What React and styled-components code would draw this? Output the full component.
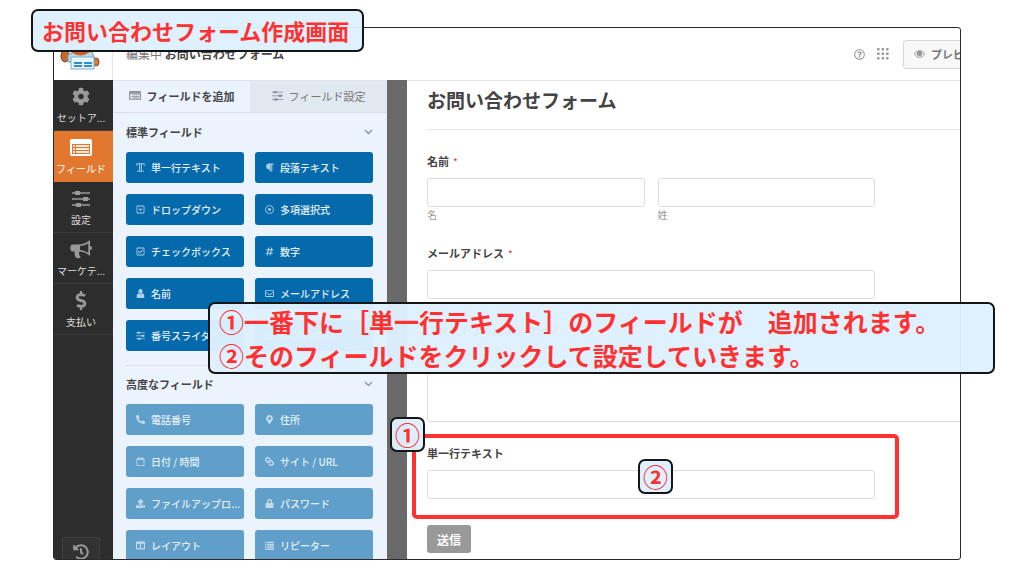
import React from "react";
import styled, { createGlobalStyle, css } from "styled-components";
import {
  FaCog,
  FaDollarSign,
  FaHistory,
  FaParagraph,
  FaRegCaretSquareDown,
  FaRegDotCircle,
  FaRegCheckSquare,
  FaHashtag,
  FaRegEnvelope,
  FaPhoneAlt,
  FaMapMarkerAlt,
  FaRegCalendar,
  FaLink,
  FaUpload,
  FaLock,
  FaColumns,
  FaRegQuestionCircle,
  FaGoogle,
} from "react-icons/fa";

const GlobalStyle = createGlobalStyle`
  *, *::before, *::after { box-sizing: border-box; }
  body {
    margin: 0;
    background: #fff;
    color: #444;
    font-family: "Noto Sans CJK JP", "Noto Sans", sans-serif;
    font-size: 11px;
  }
  button, input, textarea { font-family: inherit; }
`;

/* ---------- page and window ---------- */

const Stage = styled.div`
  position: relative;
  min-height: 100vh;
  padding: 27px 63px 16px 53px;
  overflow: hidden;
`;

const Window = styled.div`
  display: flex;
  flex-direction: column;
  height: calc(100vh - 43px);
  border: 1px solid #2a2a2a;
  border-radius: 3px;
  overflow: hidden;
  background: #fff;
`;

const Header = styled.header`
  display: flex;
  flex: 0 0 52px;
  align-items: center;
`;

const LogoBox = styled.div`
  display: flex;
  flex: 0 0 59px;
  align-self: stretch;
  align-items: flex-end;
  padding: 0 0 10px 6px;
  border-right: 1px solid #e4e4e4;
`;

const Editing = styled.p`
  flex: 1;
  margin: 0 0 0 13px;
  font-size: 12px;
  line-height: 18px;
  color: #777;

  strong {
    color: #444;
  }
`;

const Actions = styled.div`
  display: flex;
  flex: 0 0 106px;
  align-items: center;
  gap: 12px;
  overflow: hidden;
  color: #999;
`;

const IconButton = styled.button`
  display: flex;
  flex: none;
  padding: 0;
  border: 0;
  background: none;
  color: inherit;
  font-size: 11px;
`;

const PreviewButton = styled.button`
  display: flex;
  flex: none;
  align-items: center;
  gap: 6px;
  height: 29px;
  margin-left: 2px;
  padding: 0 10px;
  border: 1px solid #d6d6d6;
  border-radius: 3px;
  background: #f8f8f8;
  color: #777;
  font-size: 11px;
  font-weight: 700;
  white-space: nowrap;

  svg {
    color: #999;
  }
`;

const Body = styled.div`
  display: flex;
  flex: 1;
  min-height: 0;
`;

/* ---------- dark navigation ---------- */

const Nav = styled.nav`
  display: flex;
  flex: 0 0 59px;
  flex-direction: column;
  background: #2d2d2d;
`;

const NavItem = styled.button`
  display: flex;
  flex-direction: column;
  align-items: center;
  height: 51px;
  padding: 7px 5px 0 0;
  border: 0;
  border-bottom: 1px solid ${(p) => (p.$active ? "#e27730" : "#3b3b3b")};
  background: ${(p) => (p.$active ? "#e27730" : "transparent")};
  color: ${(p) => (p.$active ? "#fff" : "#999")};
  font-size: 18px;

  span {
    margin-top: 4px;
    color: ${(p) => (p.$active ? "#fff" : "#ddd")};
    font-size: 10px;
    line-height: 15px;
    white-space: nowrap;
  }
  svg {
    flex: none;
    height: 19px;
  }
`;

const HistoryButton = styled.button`
  display: flex;
  justify-content: center;
  width: 38px;
  height: 22px;
  margin: auto auto 0 8px;
  padding: 6px 0 0;
  overflow: hidden;
  border: 1px solid #3f3f3f;
  border-bottom: 0;
  border-radius: 3px 3px 0 0;
  background: #323232;
  color: #999;
  font-size: 16px;

  svg {
    flex: none;
  }
`;

/* ---------- field panel ---------- */

const Panel = styled.aside`
  flex: 0 0 274px;
  overflow: hidden;
  background: #ebf3fc;
`;

const Tabs = styled.div`
  display: flex;
  height: 33px;
  border-top: 1px solid #dce4ec;
`;

const Tab = styled.button`
  display: flex;
  flex: 1;
  align-items: center;
  justify-content: center;
  gap: 6px;
  padding: 0 0 2px;
  border: 0;
  border-bottom: 1px solid #d7dfe8;
  background: ${(p) => (p.$active ? "#ebf3fc" : "#e0e8f0")};
  color: ${(p) => (p.$active ? "#444" : "#777")};
  font-size: 11px;
  font-weight: ${(p) => (p.$active ? 700 : 400)};

  svg {
    color: #8b949d;
  }
`;

const Section = styled.section`
  margin: 0 14px 0 13px;
  padding: 9px 0 14px;

  & + & {
    padding-top: 8px;
    border-top: 1px solid #d9e1ea;
  }
`;

const SectionHead = styled.div`
  display: flex;
  align-items: center;
  justify-content: space-between;
  height: 20px;
  margin-bottom: 10px;

  h2 {
    margin: 0;
    font-size: 11px;
    line-height: 20px;
  }
`;

const FieldGrid = styled.div`
  display: grid;
  grid-template-columns: 1fr 1fr;
  gap: 11px;
`;

const FieldButton = styled.button`
  display: flex;
  align-items: center;
  gap: 6px;
  min-width: 0;
  height: 31px;
  padding: 0 2px 0 10px;
  border: 0;
  border-radius: 3px;
  background: ${(p) => (p.$pro ? "#609fca" : "#056aab")};
  color: ${(p) => (p.$pro ? "#e4eff7" : "#e6f0f7")};
  font-size: 10px;
  font-weight: 500;
  line-height: 15px;
  white-space: nowrap;

  svg {
    flex: none;
    width: 9px;
    height: 9px;
    opacity: 0.75;
  }
`;

/* ---------- form preview ---------- */

const Preview = styled.main`
  flex: 1;
  min-width: 0;
  padding: 6px 0 0 20px;
  overflow: hidden;
  border-left: 20px solid #696969;
  box-shadow: inset 0 1px #e6e6e6;
`;

const FormTitle = styled.h1`
  margin: 0 0 23px;
  padding-bottom: 15px;
  border-bottom: 1px solid #e6e6e6;
  font-size: 19px;
  line-height: 28px;
`;

const Field = styled.div`
  max-width: 448px;
  margin-bottom: 23px;
`;

const labelText = css`
  display: block;
  margin: 0 0 9px;
  padding: 0;
  font-size: 11px;
  font-weight: 700;
  line-height: 16px;
`;

const Label = styled.label`
  ${labelText}
`;

const NameFields = styled.fieldset`
  max-width: 448px;
  margin: 0 0 23px;
  padding: 0;
  border: 0;

  legend {
    ${labelText}
  }
`;

const Required = styled.span`
  margin-left: 4px;
  color: #d63637;
  font-size: 10px;
  font-weight: 400;
  line-height: 10px;
`;

const TextInput = styled.input`
  display: block;
  width: 100%;
  height: 29px;
  padding: 0 8px;
  border: 1px solid #dedede;
  border-radius: 3px;
  background: #fff;
`;

const TextArea = styled.textarea`
  display: block;
  width: 560px;
  height: 75px;
  border: 1px solid #dedede;
  border-radius: 3px;
  resize: none;
`;

const Pair = styled.div`
  display: grid;
  grid-template-columns: 1fr 1fr;
  gap: 13px;
`;

const SubLabel = styled.label`
  display: block;
  color: #999;
  font-size: 10px;
  line-height: 15px;
`;

const Submit = styled.button`
  display: block;
  height: 28px;
  margin-top: 26px;
  padding: 0 10px;
  border: 0;
  border-radius: 3px;
  background: #999;
  color: #fff;
  font-size: 12px;
  font-weight: 700;
`;

/* ---------- annotations laid over the window ---------- */

const callout = css`
  position: absolute;
  border: 2px solid #151515;
  border-radius: 7px;
  background: rgba(222, 241, 255, 0.97);
  color: #ff3131;
  font-weight: 700;
`;

const TitleCallout = styled.div`
  ${callout}
  top: 9px;
  left: 31px;
  padding: 0 13px 0 9px;
  font-size: 22px;
  line-height: 39px;
  white-space: nowrap;
`;

const StepsCallout = styled.div`
  ${callout}
  top: 302px;
  left: 208px;
  right: 29px;
  padding: 0 9px;
  font-size: 25px;
  line-height: 34px;
  white-space: nowrap;

  p {
    margin: 0;
  }
`;

const Highlight = styled.div`
  position: absolute;
  top: 434px;
  left: 412px;
  width: 487px;
  height: 85px;
  border: 4px solid #ff3131;
  border-radius: 5px;
`;

const Badge = styled.div`
  ${callout}
  top: ${(p) => p.$top}px;
  left: ${(p) => p.$left}px;
  width: 35px;
  height: 35px;
  font-size: 25px;
  line-height: 30px;
  text-align: center;
`;

/* ---------- drawings ---------- */

const Mascot = () => (
  <svg width="40" height="38" viewBox="0 0 40 38" aria-hidden="true">
    <circle cx="20" cy="12" r="11" fill="#e27730" stroke="#7c4a2d" />
    <ellipse cx="20" cy="18" rx="7" ry="5" fill="#f8e4c8" />
    <ellipse cx="5" cy="24" rx="4" ry="6" fill="#c8672b" stroke="#6b3f26" />
    <path d="M8 23 Q20 15 32 20 L36 30 L8 30Z" fill="#b9d9e6" stroke="#6f9cb2" />
    <path d="M11 20 Q20 27 30 20 L27 16 H14Z" fill="#c9622a" />
    <ellipse cx="36" cy="30" rx="3" ry="4" fill="#e27730" stroke="#7c4a2d" />
    <path d="M11 25 H34 V37 H11Z" fill="#e8f5fb" stroke="#79adc6" />
    <path d="M14 31 H22 M24 31 H32 M14 34 H22 M24 34 H32" stroke="#2e8fd0" strokeWidth="2" />
  </svg>
);

const FormIcon = ({ size = 22 }) => (
  <svg width={size} height={(size * 17) / 22} viewBox="0 0 22 17" aria-hidden="true">
    <path
      fill="currentColor"
      fillRule="evenodd"
      d="M2 0h18a2 2 0 0 1 2 2v13a2 2 0 0 1-2 2H2a2 2 0 0 1-2-2V2a2 2 0 0 1 2-2zM2 5v10h18V5z"
    />
    <path
      fill="currentColor"
      d="M3 6h2v2H3zM6 6h13v2H6zM3 9h2v2H3zM6 9h13v2H6zM3 12h2v2H3zM6 12h13v2H6z"
      opacity="0.85"
    />
  </svg>
);

const Sliders = ({ size = 18 }) => (
  <svg width={size} height={size} viewBox="0 0 18 18" aria-hidden="true">
    <path d="M0 3.5H18M0 9.5H18M0 15.5H18" stroke="currentColor" strokeWidth="1.4" />
    <path fill="currentColor" d="M3 1.5h5v4H3zM11 7.5h5v4h-5zM4 13.5h5v4H4z" />
  </svg>
);

const Bullhorn = () => (
  <svg width="22" height="19" viewBox="0 0 22 19" aria-hidden="true">
    <path
      fill="currentColor"
      fillRule="evenodd"
      d="M20 0v6a2 2 0 0 1 0 4v6c-3-2.800-6.500-4.200-10-4.500-1.200.5-1.400 2-.5 2.800-.7 1.200.2 1.900 1.300 2.800-.8 1.500-4 1.600-5.100.5C5 15.500 4 13.700 4.800 11.400H2.500A2 2 0 0 1 .5 9.400V6.500a2 2 0 0 1 2-2H8C12 4.500 16.500 3 20 0zM18.300 3.200C15.500 5 12.800 5.800 10 6v3.900c2.800.3 5.500 1.200 8.300 3z"
    />
  </svg>
);

const SerifT = () => (
  <svg viewBox="0 0 12 12" aria-hidden="true">
    <path
      d="M1 3.500V1h10v2.500M4.800 1v9.500M7.200 1v9.500M1.500 11h9"
      fill="none"
      stroke="currentColor"
      strokeWidth="1.300"
    />
  </svg>
);

const Person = () => (
  <svg viewBox="0 0 12 12" aria-hidden="true">
    <ellipse cx="6" cy="3.200" rx="2.800" ry="3.200" fill="currentColor" />
    <path d="M1 12V9.500C1 7 2.200 5.800 3.500 5.700a3.500 3.500 0 0 0 5 0C9.800 5.800 11 7 11 9.500V12z" fill="currentColor" />
  </svg>
);

const Rows = () => (
  <svg viewBox="0 0 12 12" aria-hidden="true">
    <path
      fill="currentColor"
      d="M0 1h2v2H0zM3 1h9v2H3zM0 4h2v2H0zM3 4h9v2H3zM0 7h2v2H0zM3 7h9v2H3zM0 10h2v2H0zM3 10h9v2H3z"
    />
  </svg>
);

const Eye = () => (
  <svg width="11" height="8" viewBox="0 0 22 16" aria-hidden="true">
    <path d="M1 8C6-1 16-1 21 8 16 17 6 17 1 8z" fill="none" stroke="currentColor" strokeWidth="2" />
    <circle cx="11" cy="7" r="5.500" fill="currentColor" />
  </svg>
);

const DotGrid = () => (
  <svg width="12" height="12" viewBox="0 0 12 12" aria-hidden="true">
    {[0, 1, 2].map((r) =>
      [0, 1, 2].map((c) => (
        <rect key={`${r}${c}`} x={c * 4.5} y={r * 4.5} width="2.6" height="2.6" rx="0.8" fill="currentColor" />
      ))
    )}
  </svg>
);

const Chevron = () => (
  <svg width="9" height="6" viewBox="0 0 9 6" aria-hidden="true">
    <path d="M1 1L4.500 4.500L8 1" fill="none" stroke="#8b98a5" strokeWidth="1.400" />
  </svg>
);

const Chain = styled(FaLink)`
  transform: rotate(90deg);
`;

/* ---------- data ---------- */

const navItems = [
  { label: "セットア...", icon: <FaCog /> },
  { label: "フィールド", icon: <FormIcon />, active: true },
  { label: "設定", icon: <Sliders /> },
  { label: "マーケテ...", icon: <Bullhorn /> },
  { label: "支払い", icon: <FaDollarSign /> },
];

const standardFields = [
  ["単一行テキスト", SerifT],
  ["段落テキスト", FaParagraph],
  ["ドロップダウン", FaRegCaretSquareDown],
  ["多項選択式", FaRegDotCircle],
  ["チェックボックス", FaRegCheckSquare],
  ["数字", FaHashtag],
  ["名前", Person],
  ["メールアドレス", FaRegEnvelope],
  ["番号スライダー", Sliders],
  ["reCAPTCHA", FaGoogle],
];

const advancedFields = [
  ["電話番号", FaPhoneAlt],
  ["住所", FaMapMarkerAlt],
  ["日付 / 時間", FaRegCalendar],
  ["サイト / URL", Chain],
  ["ファイルアップロ...", FaUpload],
  ["パスワード", FaLock],
  ["レイアウト", FaColumns],
  ["リピーター", Rows],
];

const FieldSection = ({ title, fields, pro }) => (
  <Section>
    <SectionHead>
      <h2>{title}</h2>
      <Chevron />
    </SectionHead>
    <FieldGrid>
      {fields.map(([name, Icon]) => (
        <FieldButton key={name} type="button" $pro={pro}>
          <Icon />
          {name}
        </FieldButton>
      ))}
    </FieldGrid>
  </Section>
);

export default function App() {
  return (
    <Stage>
      <GlobalStyle />
      <Window>
        <Header>
          <LogoBox>
            <Mascot />
          </LogoBox>
          <Editing>
            編集中 <strong>お問い合わせフォーム</strong>
          </Editing>
          <Actions>
            <IconButton type="button" aria-label="ヘルプ">
              <FaRegQuestionCircle />
            </IconButton>
            <IconButton type="button" aria-label="メニュー">
              <DotGrid />
            </IconButton>
            <PreviewButton type="button">
              <Eye />
              プレビュー
            </PreviewButton>
          </Actions>
        </Header>
        <Body>
          <Nav>
            {navItems.map((item) => (
              <NavItem key={item.label} type="button" $active={item.active}>
                {item.icon}
                <span>{item.label}</span>
              </NavItem>
            ))}
            <HistoryButton type="button" aria-label="履歴">
              <FaHistory />
            </HistoryButton>
          </Nav>
          <Panel>
            <Tabs>
              <Tab type="button" $active>
                <FormIcon size={12} />
                フィールドを追加
              </Tab>
              <Tab type="button">
                <Sliders size={11} />
                フィールド設定
              </Tab>
            </Tabs>
            <FieldSection title="標準フィールド" fields={standardFields} />
            <FieldSection title="高度なフィールド" fields={advancedFields} pro />
          </Panel>
          <Preview>
            <FormTitle>お問い合わせフォーム</FormTitle>
            <NameFields>
              <legend>
                名前<Required>*</Required>
              </legend>
              <Pair>
                <SubLabel>
                  <TextInput type="text" />名
                </SubLabel>
                <SubLabel>
                  <TextInput type="text" />姓
                </SubLabel>
              </Pair>
            </NameFields>
            <Field>
              <Label htmlFor="email">
                メールアドレス<Required>*</Required>
              </Label>
              <TextInput id="email" type="email" />
            </Field>
            <Field>
              <Label htmlFor="comment">コメントまたはメッセージ</Label>
              <TextArea id="comment" />
            </Field>
            <Field>
              <Label htmlFor="single">単一行テキスト</Label>
              <TextInput id="single" type="text" />
            </Field>
            <Submit type="button">送信</Submit>
          </Preview>
        </Body>
      </Window>

      <TitleCallout>お問い合わせフォーム作成画面</TitleCallout>
      <Highlight />
      <StepsCallout>
        <p>①一番下に［単一行テキスト］のフィールドが　追加されます。</p>
        <p>②そのフィールドをクリックして設定していきます。</p>
      </StepsCallout>
      <Badge $top={417} $left={390}>①</Badge>
      <Badge $top={459} $left={638}>②</Badge>
    </Stage>
  );
}
